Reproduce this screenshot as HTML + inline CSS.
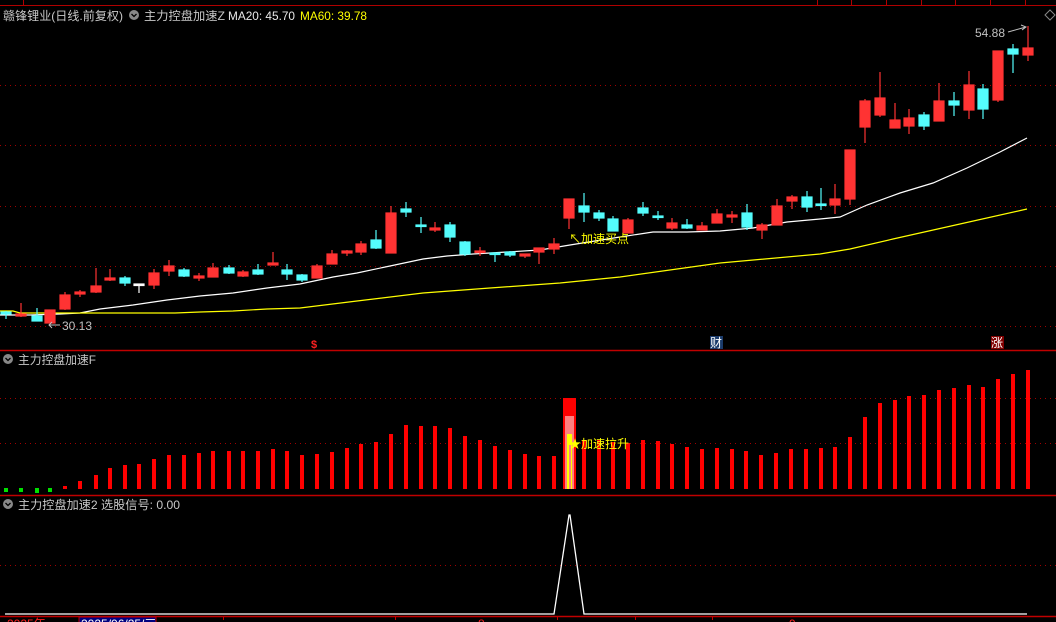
<!DOCTYPE html>
<html><head><meta charset="utf-8"><style>
html,body{margin:0;padding:0;background:#000;}
svg{display:block;}
text{font-family:"Liberation Sans","Noto Sans CJK SC",sans-serif;}
</style></head><body>
<svg width="1056" height="622" viewBox="0 0 1056 622" xmlns="http://www.w3.org/2000/svg">
<rect width="1056" height="622" fill="#000"/>
<g stroke="#b00000" stroke-width="1" fill="none">
<line x1="0" y1="5.5" x2="1056" y2="5.5"/>
<line x1="23.5" y1="0" x2="23.5" y2="5"/>
<line x1="817.5" y1="0" x2="817.5" y2="5"/><line x1="851.5" y1="0" x2="851.5" y2="5"/>
<line x1="886.5" y1="0" x2="886.5" y2="5"/><line x1="921.5" y1="0" x2="921.5" y2="5"/>
<line x1="955.5" y1="0" x2="955.5" y2="5"/><line x1="990.5" y1="0" x2="990.5" y2="5"/>
<line x1="1025.5" y1="0" x2="1025.5" y2="5"/>
</g>
<g stroke="#a00000" stroke-width="1" stroke-dasharray="1,4">
<line x1="0" y1="85.5" x2="1056" y2="85.5"/><line x1="0" y1="145.5" x2="1056" y2="145.5"/>
<line x1="0" y1="206.5" x2="1056" y2="206.5"/><line x1="0" y1="266.5" x2="1056" y2="266.5"/>
<line x1="0" y1="326.5" x2="1056" y2="326.5"/>
<line x1="0" y1="398.5" x2="1056" y2="398.5"/><line x1="0" y1="443.5" x2="1056" y2="443.5"/>
<line x1="0" y1="565.5" x2="1056" y2="565.5"/>
</g>
<g stroke="#c00000" stroke-width="1.5">
<line x1="0" y1="350.5" x2="1056" y2="350.5"/>
<line x1="0" y1="495.5" x2="1056" y2="495.5"/>
<line x1="0" y1="616.5" x2="1056" y2="616.5"/>
</g>
<circle cx="134" cy="15" r="5" fill="#888"/><path d="M131.5 14 L134 16.5 L136.5 14" stroke="#000" fill="none" stroke-width="1.3"/>
<text x="3" y="20" font-size="12" fill="#c8c8c8" textLength="120" lengthAdjust="spacingAndGlyphs">赣锋锂业(日线.前复权)</text>
<text x="144" y="20" font-size="12" fill="#c8c8c8" textLength="81" lengthAdjust="spacingAndGlyphs">主力控盘加速Z</text>
<text x="228" y="20" font-size="12" fill="#e8e8e8" textLength="67" lengthAdjust="spacingAndGlyphs">MA20: 45.70</text>
<text x="300" y="20" font-size="12" fill="#ffff00" textLength="67" lengthAdjust="spacingAndGlyphs">MA60: 39.78</text>
<path d="M1050 10 L1055 15 L1050 20 L1045 15 Z" stroke="#888" fill="none"/>
<circle cx="8" cy="359" r="5" fill="#888"/><path d="M5.5 358 L8 360.5 L10.5 358" stroke="#000" fill="none" stroke-width="1.3"/>
<text x="18" y="364" font-size="12" fill="#c8c8c8" textLength="78" lengthAdjust="spacingAndGlyphs">主力控盘加速F</text>
<circle cx="8" cy="504" r="5" fill="#888"/><path d="M5.5 503 L8 505.5 L10.5 503" stroke="#000" fill="none" stroke-width="1.3"/>
<text x="18" y="509" font-size="12" fill="#c8c8c8" textLength="162" lengthAdjust="spacingAndGlyphs">主力控盘加速2 选股信号: 0.00</text>
<polyline fill="none" stroke="#ffffff" stroke-width="1.2" points="0,315 30,315 60,314 80,313 100,309 133,305 167,300 200,296 233,293 267,288 300,284 333,277 357,273 390,266 423,259 447,256 473,254 507,252 540,250 570,245 620,237 653,232 687,232 720,231 753,228 787,222 820,219 840,217 867,205 900,193 933,183 967,168 1000,152 1027,138"/>
<polyline fill="none" stroke="#ffff00" stroke-width="1.2" points="0,311 13,311 20,313 175,313 200,312 233,311 267,309 300,308 357,301 423,293 490,288 560,283 620,277 720,263 820,254 850,249 893,239 960,224 1027,209"/>
<g stroke-width="1.2">
<g stroke="#54fcfc" fill="#54fcfc"><line x1="6" y1="311" x2="6" y2="319"/><rect x="1" y="312" width="10" height="2"/></g>
<g stroke="#ff3333" fill="#ff3333"><line x1="21" y1="303" x2="21" y2="317"/><rect x="16" y="314" width="10" height="2"/></g>
<g stroke="#54fcfc" fill="#54fcfc"><line x1="37" y1="308" x2="37" y2="321"/><rect x="32" y="316" width="10" height="5"/></g>
<g stroke="#ff3333" fill="#ff3333"><line x1="50" y1="310" x2="50" y2="323"/><rect x="45" y="310" width="10" height="13"/></g>
<g stroke="#ff3333" fill="#ff3333"><line x1="65" y1="292" x2="65" y2="310"/><rect x="60" y="295" width="10" height="14"/></g>
<g stroke="#ff3333" fill="#ff3333"><line x1="80" y1="290" x2="80" y2="297"/><rect x="75" y="292" width="10" height="2"/></g>
<g stroke="#ff3333" fill="#ff3333"><line x1="96" y1="268" x2="96" y2="293"/><rect x="91" y="286" width="10" height="6"/></g>
<g stroke="#ff3333" fill="#ff3333"><line x1="110" y1="269" x2="110" y2="281"/><rect x="105" y="278" width="10" height="2"/></g>
<g stroke="#54fcfc" fill="#54fcfc"><line x1="125" y1="276" x2="125" y2="286"/><rect x="120" y="278" width="10" height="5"/></g>
<g stroke="#ffffff" fill="#ffffff"><line x1="139" y1="284" x2="139" y2="293"/><rect x="134" y="284" width="10" height="1.5"/></g>
<g stroke="#ff3333" fill="#ff3333"><line x1="154" y1="269" x2="154" y2="289"/><rect x="149" y="273" width="10" height="12"/></g>
<g stroke="#ff3333" fill="#ff3333"><line x1="169" y1="260" x2="169" y2="276"/><rect x="164" y="266" width="10" height="5"/></g>
<g stroke="#54fcfc" fill="#54fcfc"><line x1="184" y1="268" x2="184" y2="277"/><rect x="179" y="270" width="10" height="6"/></g>
<g stroke="#ff3333" fill="#ff3333"><line x1="199" y1="273" x2="199" y2="281"/><rect x="194" y="276" width="10" height="2"/></g>
<g stroke="#ff3333" fill="#ff3333"><line x1="213" y1="263" x2="213" y2="277"/><rect x="208" y="268" width="10" height="9"/></g>
<g stroke="#54fcfc" fill="#54fcfc"><line x1="229" y1="265" x2="229" y2="274"/><rect x="224" y="268" width="10" height="5"/></g>
<g stroke="#ff3333" fill="#ff3333"><line x1="243" y1="270" x2="243" y2="277"/><rect x="238" y="272" width="10" height="4"/></g>
<g stroke="#54fcfc" fill="#54fcfc"><line x1="258" y1="264" x2="258" y2="275"/><rect x="253" y="270" width="10" height="4"/></g>
<g stroke="#ff3333" fill="#ff3333"><line x1="273" y1="252" x2="273" y2="265"/><rect x="268" y="263" width="10" height="2"/></g>
<g stroke="#54fcfc" fill="#54fcfc"><line x1="287" y1="264" x2="287" y2="280"/><rect x="282" y="270" width="10" height="4"/></g>
<g stroke="#54fcfc" fill="#54fcfc"><line x1="302" y1="274" x2="302" y2="282"/><rect x="297" y="275" width="10" height="5"/></g>
<g stroke="#ff3333" fill="#ff3333"><line x1="317" y1="264" x2="317" y2="278"/><rect x="312" y="266" width="10" height="12"/></g>
<g stroke="#ff3333" fill="#ff3333"><line x1="332" y1="250" x2="332" y2="264"/><rect x="327" y="254" width="10" height="10"/></g>
<g stroke="#ff3333" fill="#ff3333"><line x1="347" y1="250" x2="347" y2="256"/><rect x="342" y="251" width="10" height="2"/></g>
<g stroke="#ff3333" fill="#ff3333"><line x1="361" y1="241" x2="361" y2="255"/><rect x="356" y="244" width="10" height="8"/></g>
<g stroke="#54fcfc" fill="#54fcfc"><line x1="376" y1="230" x2="376" y2="249"/><rect x="371" y="240" width="10" height="8"/></g>
<g stroke="#ff3333" fill="#ff3333"><line x1="391" y1="206" x2="391" y2="253"/><rect x="386" y="213" width="10" height="40"/></g>
<g stroke="#54fcfc" fill="#54fcfc"><line x1="406" y1="202" x2="406" y2="217"/><rect x="401" y="209" width="10" height="3"/></g>
<g stroke="#54fcfc" fill="#54fcfc"><line x1="421" y1="217" x2="421" y2="233"/><rect x="416" y="225" width="10" height="1.5"/></g>
<g stroke="#ff3333" fill="#ff3333"><line x1="435" y1="222" x2="435" y2="232"/><rect x="430" y="228" width="10" height="2"/></g>
<g stroke="#54fcfc" fill="#54fcfc"><line x1="450" y1="222" x2="450" y2="242"/><rect x="445" y="225" width="10" height="12"/></g>
<g stroke="#54fcfc" fill="#54fcfc"><line x1="465" y1="241" x2="465" y2="256"/><rect x="460" y="242" width="10" height="12"/></g>
<g stroke="#ff3333" fill="#ff3333"><line x1="480" y1="247" x2="480" y2="256"/><rect x="475" y="251" width="10" height="1.5"/></g>
<g stroke="#54fcfc" fill="#54fcfc"><line x1="495" y1="252" x2="495" y2="262"/><rect x="490" y="253" width="10" height="1.5"/></g>
<g stroke="#54fcfc" fill="#54fcfc"><line x1="510" y1="251" x2="510" y2="257"/><rect x="505" y="252" width="10" height="3"/></g>
<g stroke="#ff3333" fill="#ff3333"><line x1="525" y1="254" x2="525" y2="258"/><rect x="520" y="254" width="10" height="2"/></g>
<g stroke="#ff3333" fill="#ff3333"><line x1="539" y1="248" x2="539" y2="264"/><rect x="534" y="248" width="10" height="4"/></g>
<g stroke="#ff3333" fill="#ff3333"><line x1="554" y1="238" x2="554" y2="254"/><rect x="549" y="244" width="10" height="5"/></g>
<g stroke="#ff3333" fill="#ff3333"><line x1="569" y1="199" x2="569" y2="229"/><rect x="564" y="199" width="10" height="19"/></g>
<g stroke="#54fcfc" fill="#54fcfc"><line x1="584" y1="193" x2="584" y2="222"/><rect x="579" y="206" width="10" height="6"/></g>
<g stroke="#54fcfc" fill="#54fcfc"><line x1="599" y1="210" x2="599" y2="221"/><rect x="594" y="213" width="10" height="5"/></g>
<g stroke="#54fcfc" fill="#54fcfc"><line x1="613" y1="216" x2="613" y2="231"/><rect x="608" y="219" width="10" height="12"/></g>
<g stroke="#ff3333" fill="#ff3333"><line x1="628" y1="218" x2="628" y2="233"/><rect x="623" y="220" width="10" height="13"/></g>
<g stroke="#54fcfc" fill="#54fcfc"><line x1="643" y1="202" x2="643" y2="216"/><rect x="638" y="208" width="10" height="5"/></g>
<g stroke="#54fcfc" fill="#54fcfc"><line x1="658" y1="211" x2="658" y2="220"/><rect x="653" y="216" width="10" height="1.5"/></g>
<g stroke="#ff3333" fill="#ff3333"><line x1="672" y1="218" x2="672" y2="230"/><rect x="667" y="223" width="10" height="5"/></g>
<g stroke="#54fcfc" fill="#54fcfc"><line x1="687" y1="219" x2="687" y2="229"/><rect x="682" y="225" width="10" height="3"/></g>
<g stroke="#ff3333" fill="#ff3333"><line x1="702" y1="222" x2="702" y2="230"/><rect x="697" y="226" width="10" height="4"/></g>
<g stroke="#ff3333" fill="#ff3333"><line x1="717" y1="209" x2="717" y2="223"/><rect x="712" y="214" width="10" height="9"/></g>
<g stroke="#ff3333" fill="#ff3333"><line x1="732" y1="211" x2="732" y2="223"/><rect x="727" y="215" width="10" height="2"/></g>
<g stroke="#54fcfc" fill="#54fcfc"><line x1="747" y1="204" x2="747" y2="230"/><rect x="742" y="213" width="10" height="14"/></g>
<g stroke="#ff3333" fill="#ff3333"><line x1="762" y1="223" x2="762" y2="239"/><rect x="757" y="225" width="10" height="5"/></g>
<g stroke="#ff3333" fill="#ff3333"><line x1="777" y1="199" x2="777" y2="225"/><rect x="772" y="206" width="10" height="19"/></g>
<g stroke="#ff3333" fill="#ff3333"><line x1="792" y1="195" x2="792" y2="209"/><rect x="787" y="197" width="10" height="4"/></g>
<g stroke="#54fcfc" fill="#54fcfc"><line x1="807" y1="191" x2="807" y2="212"/><rect x="802" y="197" width="10" height="10"/></g>
<g stroke="#54fcfc" fill="#54fcfc"><line x1="821" y1="188" x2="821" y2="210"/><rect x="816" y="204" width="10" height="1.5"/></g>
<g stroke="#ff3333" fill="#ff3333"><line x1="835" y1="184" x2="835" y2="214"/><rect x="830" y="199" width="10" height="6"/></g>
<g stroke="#ff3333" fill="#ff3333"><line x1="850" y1="150" x2="850" y2="205"/><rect x="845" y="150" width="10" height="49"/></g>
<g stroke="#ff3333" fill="#ff3333"><line x1="865" y1="99" x2="865" y2="143"/><rect x="860" y="101" width="10" height="26"/></g>
<g stroke="#ff3333" fill="#ff3333"><line x1="880" y1="72" x2="880" y2="117"/><rect x="875" y="98" width="10" height="17"/></g>
<g stroke="#ff3333" fill="#ff3333"><line x1="895" y1="103" x2="895" y2="128"/><rect x="890" y="120" width="10" height="8"/></g>
<g stroke="#ff3333" fill="#ff3333"><line x1="909" y1="109" x2="909" y2="134"/><rect x="904" y="118" width="10" height="8"/></g>
<g stroke="#54fcfc" fill="#54fcfc"><line x1="924" y1="112" x2="924" y2="130"/><rect x="919" y="115" width="10" height="11"/></g>
<g stroke="#ff3333" fill="#ff3333"><line x1="939" y1="83" x2="939" y2="121"/><rect x="934" y="101" width="10" height="20"/></g>
<g stroke="#54fcfc" fill="#54fcfc"><line x1="954" y1="92" x2="954" y2="116"/><rect x="949" y="101" width="10" height="4"/></g>
<g stroke="#ff3333" fill="#ff3333"><line x1="969" y1="71" x2="969" y2="119"/><rect x="964" y="85" width="10" height="25"/></g>
<g stroke="#54fcfc" fill="#54fcfc"><line x1="983" y1="84" x2="983" y2="119"/><rect x="978" y="89" width="10" height="20"/></g>
<g stroke="#ff3333" fill="#ff3333"><line x1="998" y1="51" x2="998" y2="102"/><rect x="993" y="51" width="10" height="49"/></g>
<g stroke="#54fcfc" fill="#54fcfc"><line x1="1013" y1="44" x2="1013" y2="73"/><rect x="1008" y="49" width="10" height="5"/></g>
<g stroke="#ff3333" fill="#ff3333"><line x1="1028" y1="26" x2="1028" y2="61"/><rect x="1023" y="48" width="10" height="7"/></g>
</g>
<text x="62" y="330" font-size="12" fill="#c0c0c0">30.13</text>
<path d="M60 325 L49 325 M52 322 L49 325 L52 328" stroke="#c0c0c0" fill="none"/>
<text x="975" y="37" font-size="12" fill="#c0c0c0">54.88</text>
<path d="M1008 32 L1026 27 M1021 25 L1026 27 L1022 30" stroke="#c0c0c0" fill="none"/>
<text x="569" y="243" font-size="12" fill="#ffff00">↖加速买点</text>
<text x="311" y="348" font-size="11" font-weight="bold" fill="#ff2020">$</text>
<rect x="710" y="336" width="13" height="13" fill="#1a3a6a"/><text x="710" y="347" font-size="12" fill="#ffffff">财</text>
<rect x="991" y="336" width="13" height="13" fill="#800000"/><text x="991" y="347" font-size="12" fill="#ffffff">涨</text>
<g fill="#00e000">
<rect x="4" y="488" width="4" height="4"/><rect x="19" y="488" width="4" height="4"/><rect x="35" y="488" width="4" height="5"/><rect x="48" y="488" width="4" height="4"/>
</g>
<g fill="#ff0000" transform="translate(-0.5,0)">
<rect x="63.5" y="486" width="4" height="3"/><rect x="78.5" y="481" width="4" height="8"/><rect x="94.5" y="475" width="4" height="14"/>
<rect x="108.5" y="468" width="4" height="21"/><rect x="123.5" y="465" width="4" height="24"/><rect x="137.5" y="464" width="4" height="25"/>
<rect x="152.5" y="459" width="4" height="30"/><rect x="167.5" y="455" width="4" height="34"/><rect x="182.5" y="455" width="4" height="34"/>
<rect x="197.5" y="453" width="4" height="36"/><rect x="211.5" y="451" width="4" height="38"/><rect x="227.5" y="451" width="4" height="38"/>
<rect x="241.5" y="451" width="4" height="38"/><rect x="256.5" y="451" width="4" height="38"/><rect x="271.5" y="449" width="4" height="40"/>
<rect x="285.5" y="451" width="4" height="38"/><rect x="300.5" y="455" width="4" height="34"/><rect x="315.5" y="454" width="4" height="35"/>
<rect x="330.5" y="452" width="4" height="37"/><rect x="345.5" y="448" width="4" height="41"/><rect x="359.5" y="444" width="4" height="45"/>
<rect x="374.5" y="442" width="4" height="47"/><rect x="389.5" y="434" width="4" height="55"/><rect x="404.5" y="425" width="4" height="64"/>
<rect x="419.5" y="426" width="4" height="63"/><rect x="433.5" y="426" width="4" height="63"/><rect x="448.5" y="428" width="4" height="61"/>
<rect x="463.5" y="436" width="4" height="53"/><rect x="478.5" y="440" width="4" height="49"/><rect x="493.5" y="446" width="4" height="43"/>
<rect x="508.5" y="450" width="4" height="39"/><rect x="523.5" y="454" width="4" height="35"/><rect x="537.5" y="456" width="4" height="33"/>
<rect x="552.5" y="456" width="4" height="33"/>
<rect x="582.5" y="440" width="4" height="49"/><rect x="597.5" y="440" width="4" height="49"/><rect x="611.5" y="442" width="4" height="47"/>
<rect x="626.5" y="443" width="4" height="46"/><rect x="641.5" y="440" width="4" height="49"/><rect x="656.5" y="441" width="4" height="48"/>
<rect x="670.5" y="444" width="4" height="45"/><rect x="685.5" y="447" width="4" height="42"/><rect x="700.5" y="449" width="4" height="40"/>
<rect x="715.5" y="448" width="4" height="41"/><rect x="730.5" y="449" width="4" height="40"/><rect x="744.5" y="451" width="4" height="38"/>
<rect x="759.5" y="455" width="4" height="34"/><rect x="774.5" y="453" width="4" height="36"/><rect x="789.5" y="449" width="4" height="40"/>
<rect x="804.5" y="449" width="4" height="40"/><rect x="819.5" y="448" width="4" height="41"/><rect x="833.5" y="447" width="4" height="42"/>
<rect x="848.5" y="437" width="4" height="52"/><rect x="863.5" y="417" width="4" height="72"/><rect x="878.5" y="403" width="4" height="86"/>
<rect x="893.5" y="400" width="4" height="89"/><rect x="907.5" y="396" width="4" height="93"/><rect x="922.5" y="395" width="4" height="94"/>
<rect x="937.5" y="390" width="4" height="99"/><rect x="952.5" y="388" width="4" height="101"/><rect x="967.5" y="385" width="4" height="104"/>
<rect x="981.5" y="387" width="4" height="102"/><rect x="996.5" y="379" width="4" height="110"/><rect x="1011.5" y="374" width="4" height="115"/>
<rect x="1026.5" y="370" width="4" height="119"/>
</g>
<rect x="563" y="398" width="13" height="91" fill="#ff0000"/>
<rect x="565" y="416" width="9" height="73" fill="#ff8080"/>
<rect x="567" y="434" width="5" height="55" fill="#ffff00"/>
<rect x="569" y="445" width="2" height="44" fill="#ff8080"/>
<text x="569" y="448" font-size="12" fill="#ffff00">★加速拉升</text>
<polyline fill="none" stroke="#ffffff" stroke-width="1.3" points="5,614 554,614 569,515 570,515 584,614 1027,614"/>
<g stroke="#c00000"><line x1="223.5" y1="617" x2="223.5" y2="620"/><line x1="395.5" y1="617" x2="395.5" y2="620"/><line x1="557.5" y1="617" x2="557.5" y2="620"/><line x1="635.5" y1="617" x2="635.5" y2="620"/><line x1="712.5" y1="617" x2="712.5" y2="620"/></g>
<text x="7" y="628" font-size="12" fill="#ff2020">2025年</text>
<rect x="79" y="617" width="77" height="8" fill="#000080" stroke="#c00000"/>
<text x="81" y="628" font-size="12" fill="#ffffff">2025/06/25/三</text>
<text x="478" y="628" font-size="12" fill="#ff2020">8</text>
<text x="789" y="628" font-size="12" fill="#ff2020">9</text>
</svg>
</body></html>
